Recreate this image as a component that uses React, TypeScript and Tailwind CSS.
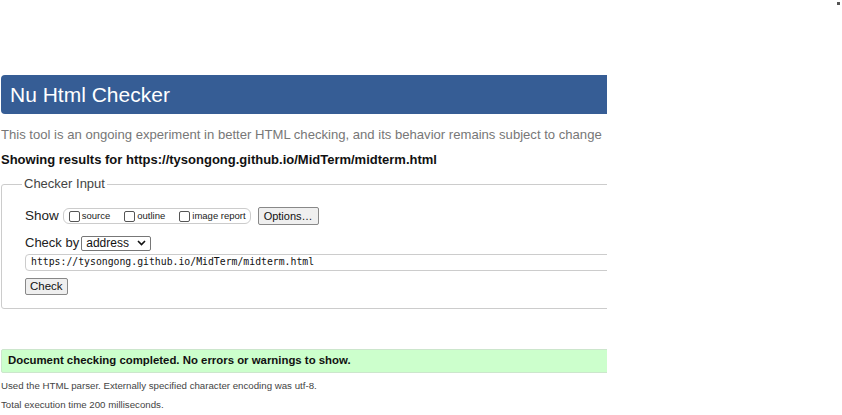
export default function App() {
  return (
    <div className="relative h-[415px] w-[842px] overflow-hidden bg-white font-['Liberation_Sans',Arial,sans-serif]">
      <div className="absolute right-[2px] top-[2px] h-[3px] w-[3px] bg-[#555]" />
      <div className="w-[607px] overflow-hidden pt-[75px]">
        <div className="w-[760px] pl-[1px]">
          <div className="flex h-[39px] items-center rounded-l-[4px] bg-[#365d95] pl-[9px] text-[21px] leading-none text-white">
            Nu Html Checker
          </div>
          <p className="mt-[12px] text-[13.1px] leading-[18px] text-[#777]">
            This tool is an ongoing experiment in better HTML checking, and its behavior remains subject to change
          </p>
          <p className="mt-[7px] text-[13px] font-bold leading-[18px] text-[#111]">
            Showing results for https://tysongong.github.io/MidTerm/midterm.html
          </p>

          <fieldset className="mt-[6px] h-[134px] rounded-[3px] border border-[#ccc] pl-[23px]">
            <legend className="ml-[-3px] px-[2px] text-[13px] leading-[18px] text-[#444]">
              Checker Input
            </legend>
            <div className="mt-[13px] flex items-center">
              <span className="text-[13.5px] text-[#222]">Show</span>
              <div className="ml-[4px] flex h-[16px] items-center rounded-[6px] border border-[#ccc] pl-[5px] pr-[4px] text-[9.5px] text-[#222]">
                <Box />
                <span className="ml-[2px]">source</span>
                <Box cls="ml-[14px]" />
                <span className="ml-[2px]">outline</span>
                <Box cls="ml-[14px]" />
                <span className="ml-[2px]">image report</span>
              </div>
              <button className="ml-[7px] h-[18px] rounded-[2px] border border-[#888] bg-[#efefef] px-[5px] text-[11px] leading-none text-[#111]">
                Options…
              </button>
            </div>
            <div className="mt-[7px] flex items-center">
              <span className="text-[13px] text-[#222]">Check by</span>
              <div className="ml-[2px] flex h-[15px] w-[70px] items-center justify-between rounded-[2px] border border-[#777] px-[4px] text-[12px] text-[#111]">
                <span>address</span>
                <svg width="9" height="6" viewBox="0 0 9 6">
                  <path d="M1 1l3.5 3.5L8 1" fill="none" stroke="#111" strokeWidth="1.6" />
                </svg>
              </div>
            </div>
            <div className="mt-[1px] flex h-[17px] w-[700px] items-center rounded-[4px] border border-[#ccc] pl-[5px] font-['DejaVu_Sans_Mono',monospace] text-[9.8px] text-[#111]">
              https://tysongong.github.io/MidTerm/midterm.html
            </div>
            <button className="mt-[7px] h-[17px] rounded-[2px] border border-[#888] bg-[#efefef] px-[4px] text-[11.5px] leading-none text-[#111]">
              Check
            </button>
          </fieldset>

          <div className="mt-[40px] flex h-[24px] items-center rounded-l-[2px] border border-[#cce6cc] bg-[#ccffcc] pl-[6px] text-[11.4px] font-bold text-[#111]">
            Document checking completed. No errors or warnings to show.
          </div>
          <p className="mt-[6px] text-[9.7px] leading-[14px] text-[#444]">
            Used the HTML parser. Externally specified character encoding was utf-8.
          </p>
          <p className="mt-[5px] text-[9.7px] leading-[14px] text-[#444]">
            Total execution time 200 milliseconds.
          </p>
        </div>
      </div>
    </div>
  );
}

function Box({ cls = "" }: { cls?: string }) {
  return <span className={`inline-block h-[11px] w-[11px] rounded-[2px] border border-[#555] bg-white ${cls}`} />;
}
